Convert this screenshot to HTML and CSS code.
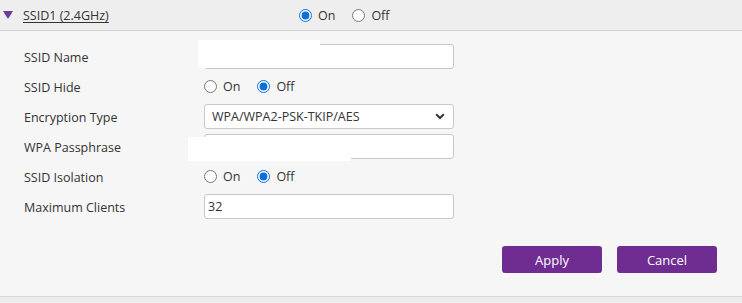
FILE: index.html
```html
<!DOCTYPE html>
<html lang="en">
<head>
<meta charset="utf-8">
<title>SSID1 settings</title>
<link rel="stylesheet" href="styles.css">
</head>
<body>
<div class="panel">
  <div class="panel-head">
    <span class="caret"></span>
    <a class="panel-title" href="#">SSID1 (2.4GHz)</a>
    <div class="radio-group">
      <label class="radio"><input type="radio" name="ssid1" checked><span>On</span></label>
      <label class="radio"><input type="radio" name="ssid1"><span>Off</span></label>
    </div>
  </div>
  <div class="panel-body">
    <div class="form">
      <div class="row">
        <div class="label">SSID Name</div>
        <div class="field">
          <input class="text-input" type="text" value="">
          <span class="redact redact-name"></span>
        </div>
      </div>
      <div class="row">
        <div class="label">SSID Hide</div>
        <div class="field radio-group">
          <label class="radio"><input type="radio" name="hide"><span>On</span></label>
          <label class="radio"><input type="radio" name="hide" checked><span>Off</span></label>
        </div>
      </div>
      <div class="row">
        <div class="label">Encryption Type</div>
        <div class="field">
          <div class="select">
            <span class="select-value">WPA/WPA2-PSK-TKIP/AES</span>
            <svg class="chevron" width="10" height="7" viewBox="0 0 10 7"><path d="M1.2 1.3 L5 5 L8.8 1.3" fill="none" stroke="#333" stroke-width="2"/></svg>
          </div>
        </div>
      </div>
      <div class="row">
        <div class="label">WPA Passphrase</div>
        <div class="field">
          <input class="text-input" type="text" value="">
          <span class="redact redact-pass"></span>
        </div>
      </div>
      <div class="row">
        <div class="label">SSID Isolation</div>
        <div class="field radio-group">
          <label class="radio"><input type="radio" name="iso"><span>On</span></label>
          <label class="radio"><input type="radio" name="iso" checked><span>Off</span></label>
        </div>
      </div>
      <div class="row">
        <div class="label">Maximum Clients</div>
        <div class="field">
          <input class="text-input" type="text" value="32">
        </div>
      </div>
    </div>
    <div class="actions">
      <button class="btn" type="button">Apply</button>
      <button class="btn" type="button">Cancel</button>
    </div>
  </div>
</div>
</body>
</html>
```
FILE: styles.css
```css
html, body {
  margin: 0;
  padding: 0;
}
body {
  background: #ececec;
  font-family: "Open Sans", "Noto Sans", sans-serif;
  font-size: 12.5px;
  color: #333;
  height: 303px;
  overflow: hidden;
}
.panel {
  background: #f6f6f6;
  border-bottom: 1px solid #d6d6d6;
}
.panel-head {
  height: 30px;
  background: #eeeeee;
  border-bottom: 1px solid #d2d2d2;
  display: flex;
  align-items: center;
}
.caret {
  width: 0;
  height: 0;
  margin-left: 3px;
  margin-top: 0;
  border-left: 5px solid transparent;
  border-right: 5px solid transparent;
  border-top: 8px solid #6e3a97;
}
.panel-title {
  margin-left: 10px;
  width: 276px;
  color: #333;
  text-decoration: underline;
  text-underline-offset: 2px;
  margin-top: 1px;
}
.radio-group {
  display: flex;
  align-items: center;
}
.radio {
  display: flex;
  align-items: center;
  margin-right: 17px;
}
.radio input {
  width: 13px;
  height: 13px;
  margin: 0 6px 0 0;
  accent-color: #0a6fd8;
}
.panel-body {
  padding: 10px 25px 23px 24px;
}
.row {
  display: flex;
  align-items: center;
  height: 30px;
}
.label {
  width: 180px;
  flex: none;
  padding-top: 2px;
}
.field {
  position: relative;
  width: 250px;
  flex: none;
}
.text-input {
  box-sizing: border-box;
  width: 250px;
  height: 25px;
  margin: 0;
  padding: 0 3px;
  border: 1px solid #c8c8c8;
  border-radius: 3px;
  background: #fff;
  font: inherit;
  color: #333;
  outline: none;
}
.select {
  box-sizing: border-box;
  width: 250px;
  height: 25px;
  border: 1px solid #c8c8c8;
  border-radius: 3px;
  background: #fff;
  display: flex;
  align-items: center;
  justify-content: space-between;
  padding: 0 8px 0 7px;
}
.chevron {
  display: block;
}
.redact {
  position: absolute;
  background: #fff;
}
.redact-name {
  left: -6px;
  top: -4px;
  width: 122px;
  height: 28px;
}
.redact-pass {
  left: -16px;
  top: 3px;
  width: 163px;
  height: 24px;
}
.actions {
  display: flex;
  justify-content: flex-end;
  gap: 15px;
  margin-top: 25px;
}
.btn {
  width: 100px;
  height: 27px;
  border: none;
  border-radius: 3px;
  background: #6f2c91;
  color: #fff;
  font: inherit;
  font-size: 13px;
  padding: 0;
}
```
